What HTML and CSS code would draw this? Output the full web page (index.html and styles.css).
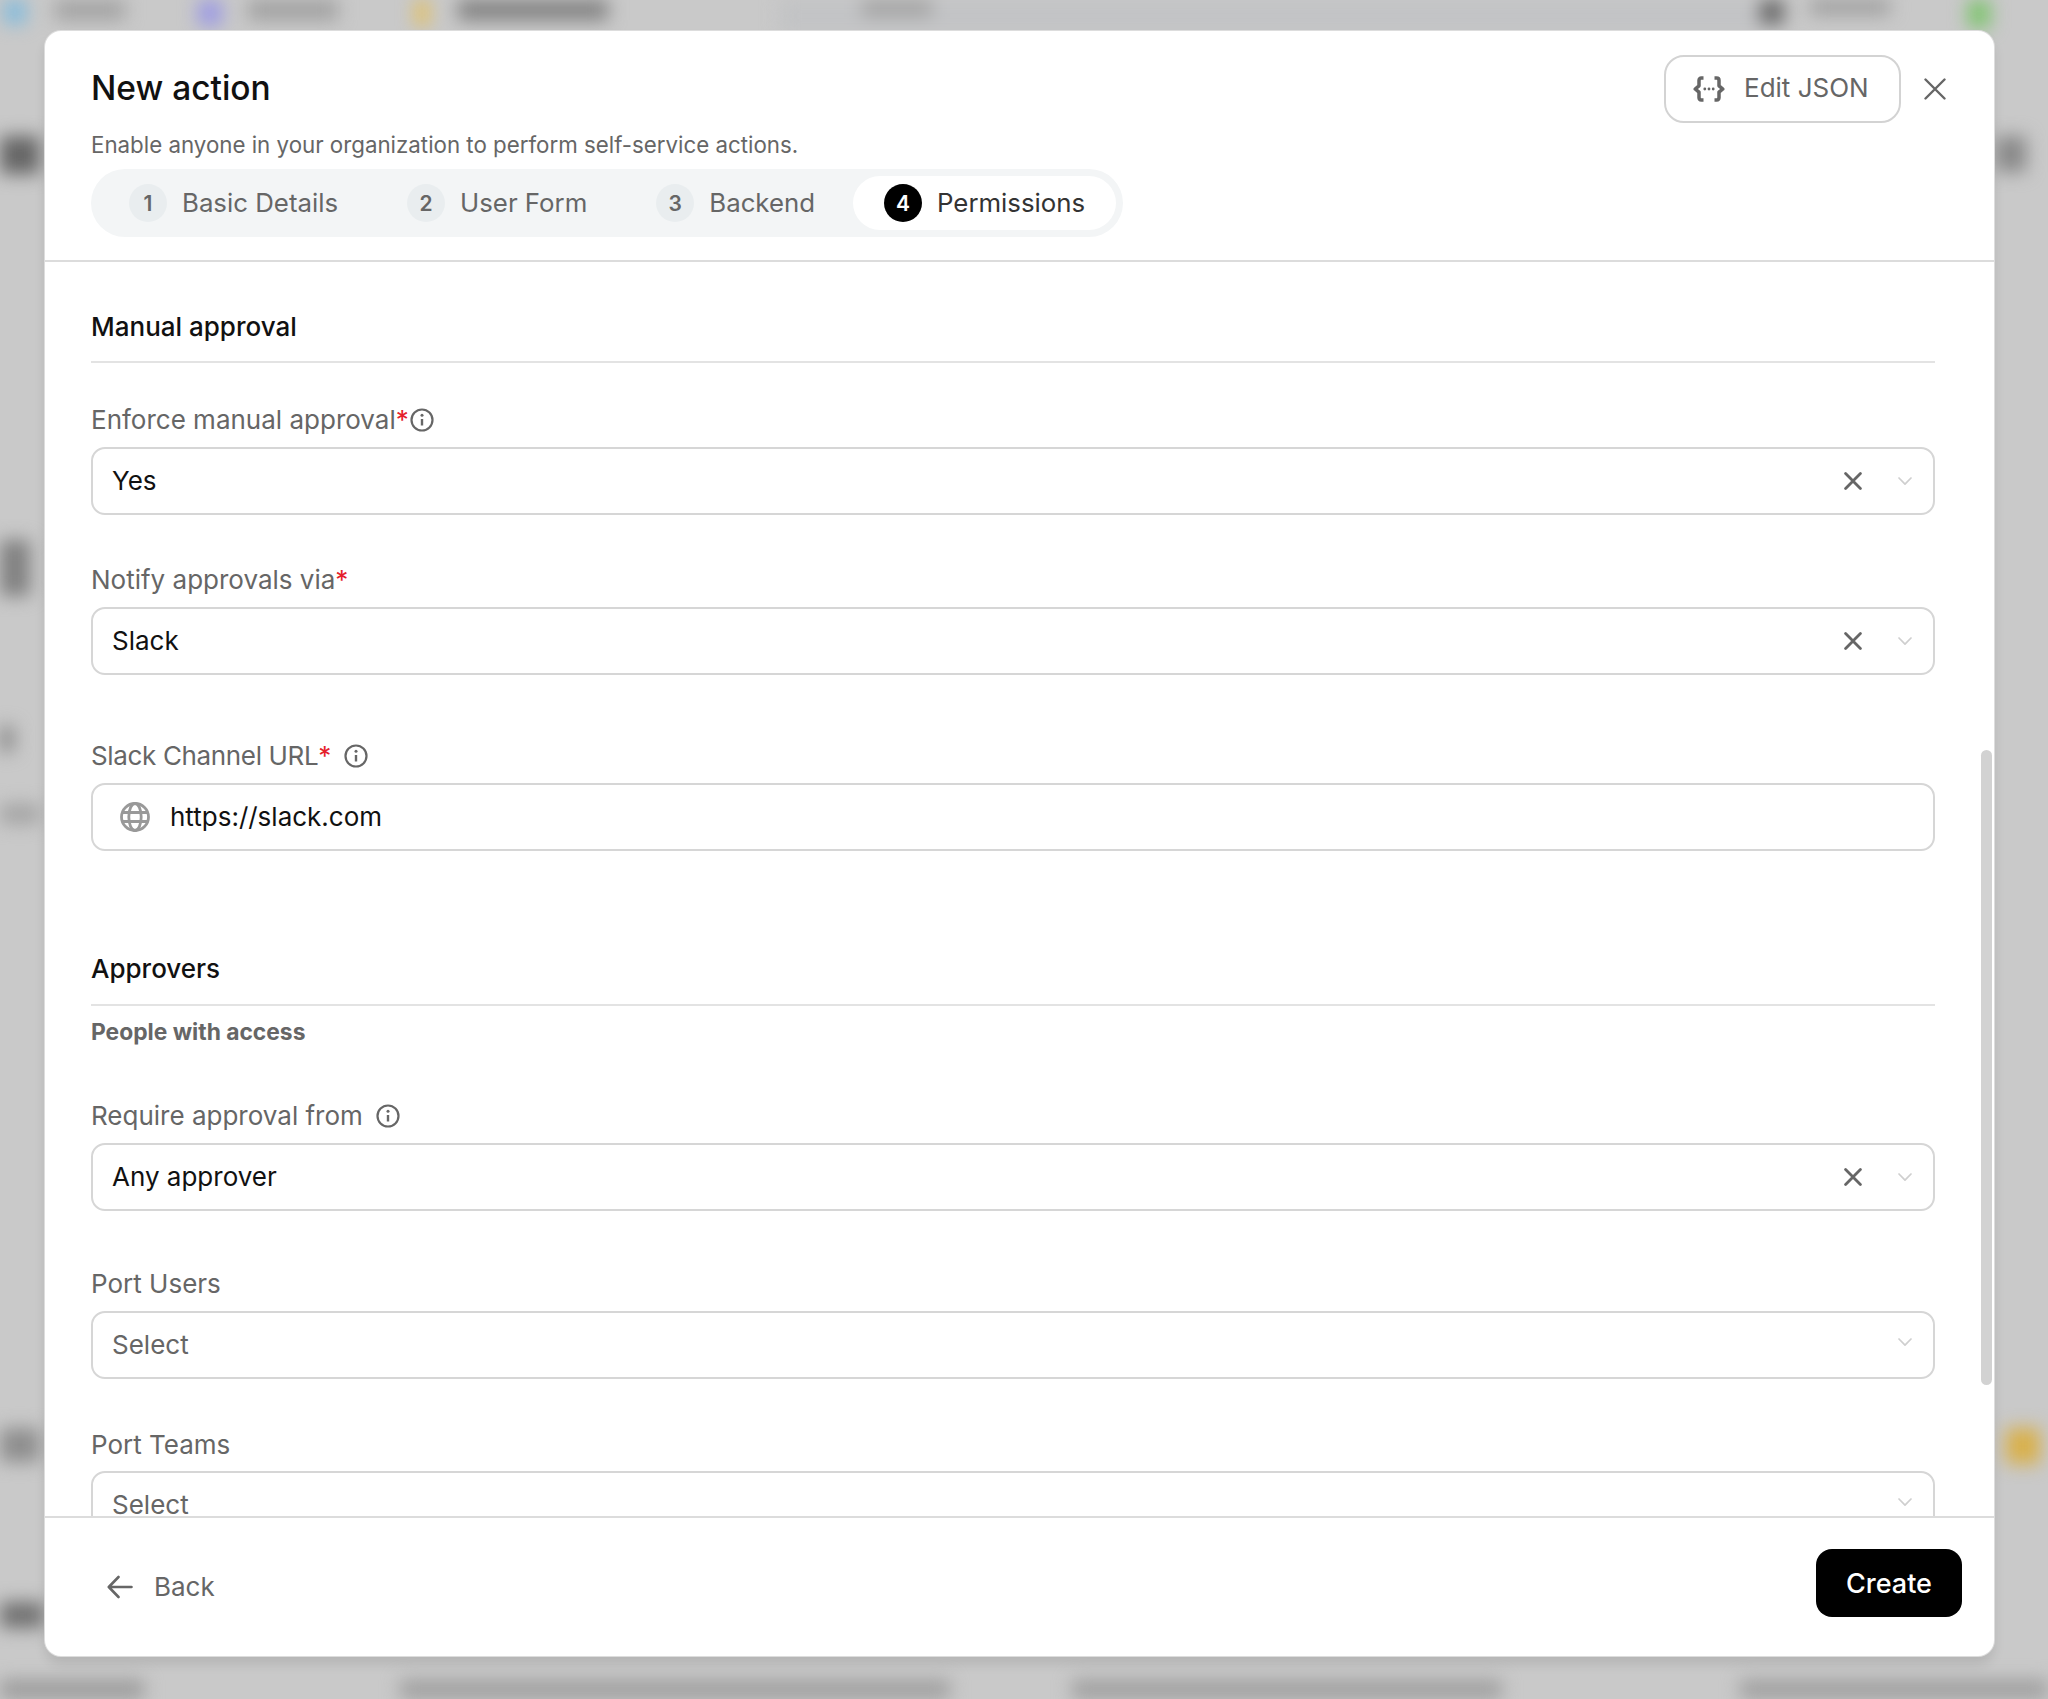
FILE: index.html
```html
<!DOCTYPE html>
<html lang="en">
<head>
<meta charset="utf-8">
<title>New action</title>
<link rel="stylesheet" href="styles.css">
</head>
<body>
<div class="backdrop" aria-hidden="true">
  <i class="blob topbar"></i>
  <i class="blob b1"></i><i class="blob b2"></i><i class="blob b3"></i><i class="blob b4"></i><i class="blob b5"></i><i class="blob b6"></i><i class="blob b7"></i><i class="blob b8"></i><i class="blob b9"></i><i class="blob b10"></i>
  <i class="blob l1"></i><i class="blob l2"></i><i class="blob l3"></i><i class="blob l4"></i><i class="blob l5"></i><i class="blob l6"></i>
  <i class="blob r1"></i><i class="blob r2"></i>
  <i class="blob f1"></i><i class="blob f2"></i><i class="blob f3"></i><i class="blob f4"></i>
</div>

<section class="modal">
  <header class="modal-head">
    <div class="head-row">
      <h1 class="title">New action</h1>
      <div class="head-actions">
        <button class="json-btn">
          <svg class="json-icon" viewBox="0 0 32 26" fill="none" stroke="currentColor" stroke-width="3.500" stroke-linecap="butt" stroke-linejoin="round"><path d="M10.500 2H8.300C6.900 2 6 3 6 4.400V9.800L2.200 13L6 16.200V21.600C6 23 6.900 24 8.300 24H10.500"/><path d="M21.500 2H23.700C25.100 2 26 3 26 4.400V9.800L29.800 13L26 16.200V21.600C26 23 25.100 24 23.700 24H21.500"/><circle cx="11.800" cy="13" r="1.400" fill="currentColor" stroke="none"/><circle cx="16" cy="13" r="1.400" fill="currentColor" stroke="none"/><circle cx="20.200" cy="13" r="1.400" fill="currentColor" stroke="none"/></svg>
          <span class="lifted">Edit JSON</span>
        </button>
        <button class="close-btn" aria-label="Close">
          <svg viewBox="0 0 22 22" fill="none" stroke="currentColor" stroke-width="2.400" stroke-linecap="round"><path d="M1.500 1.500L20.500 20.500M20.500 1.500L1.500 20.500"/></svg>
        </button>
      </div>
    </div>
    <p class="subtitle">Enable anyone in your organization to perform self-service actions.</p>
    <nav class="steps">
      <div class="step"><span class="badge">1</span><span class="lifted">Basic Details</span></div>
      <div class="step"><span class="badge">2</span><span class="lifted">User Form</span></div>
      <div class="step"><span class="badge">3</span><span class="lifted">Backend</span></div>
      <div class="step active"><span class="badge">4</span><span class="lifted">Permissions</span></div>
    </nav>
  </header>

  <div class="modal-body">
    <h2 class="section-title first">Manual approval</h2>

    <div class="field field-first">
      <label class="label">Enforce manual approval<em class="req">*</em><svg class="info tight" viewBox="0 0 24 24" fill="none" stroke="currentColor" stroke-width="2.200"><circle cx="12" cy="12" r="10.500"/><path d="M12 11V17.500" stroke-width="2.400"/><circle cx="12" cy="7.300" r="1.500" fill="currentColor" stroke="none"/></svg></label>
      <div class="control">
        <span class="value">Yes</span>
        <svg class="clear" viewBox="0 0 18 18" fill="none" stroke="currentColor" stroke-width="2.800" stroke-linecap="round"><path d="M1.600 1.600L16.400 16.400M16.400 1.600L1.600 16.400"/></svg>
        <svg class="chev" viewBox="0 0 14 10" fill="none" stroke="currentColor" stroke-width="1.700" stroke-linecap="round" stroke-linejoin="round"><path d="M1 2L7 8.200L13 2"/></svg>
      </div>
    </div>

    <div class="field">
      <label class="label">Notify approvals via<em class="req">*</em></label>
      <div class="control">
        <span class="value">Slack</span>
        <svg class="clear" viewBox="0 0 18 18" fill="none" stroke="currentColor" stroke-width="2.800" stroke-linecap="round"><path d="M1.600 1.600L16.400 16.400M16.400 1.600L1.600 16.400"/></svg>
        <svg class="chev" viewBox="0 0 14 10" fill="none" stroke="currentColor" stroke-width="1.700" stroke-linecap="round" stroke-linejoin="round"><path d="M1 2L7 8.200L13 2"/></svg>
      </div>
    </div>

    <div class="field field-url">
      <label class="label">Slack Channel URL<em class="req">*</em><svg class="info" viewBox="0 0 24 24" fill="none" stroke="currentColor" stroke-width="2.200"><circle cx="12" cy="12" r="10.500"/><path d="M12 11V17.500" stroke-width="2.400"/><circle cx="12" cy="7.300" r="1.500" fill="currentColor" stroke="none"/></svg></label>
      <div class="control">
        <svg class="globe" viewBox="0 0 30 30" fill="none" stroke="currentColor" stroke-width="2.800"><circle cx="15" cy="15" r="13.500"/><ellipse cx="15" cy="15" rx="6.200" ry="13.500"/><path d="M2.800 10.500H27.200M2.800 19.500H27.200"/></svg>
        <span class="value">https://slack.com</span>
      </div>
    </div>

    <h2 class="section-title second">Approvers</h2>
    <p class="note">People with access</p>

    <div class="field field-require">
      <label class="label">Require approval from<svg class="info" viewBox="0 0 24 24" fill="none" stroke="currentColor" stroke-width="2.200"><circle cx="12" cy="12" r="10.500"/><path d="M12 11V17.500" stroke-width="2.400"/><circle cx="12" cy="7.300" r="1.500" fill="currentColor" stroke="none"/></svg></label>
      <div class="control">
        <span class="value">Any approver</span>
        <svg class="clear" viewBox="0 0 18 18" fill="none" stroke="currentColor" stroke-width="2.800" stroke-linecap="round"><path d="M1.600 1.600L16.400 16.400M16.400 1.600L1.600 16.400"/></svg>
        <svg class="chev" viewBox="0 0 14 10" fill="none" stroke="currentColor" stroke-width="1.700" stroke-linecap="round" stroke-linejoin="round"><path d="M1 2L7 8.200L13 2"/></svg>
      </div>
    </div>

    <div class="field field-users">
      <label class="label">Port Users</label>
      <div class="control">
        <span class="value placeholder">Select</span>
        <svg class="chev raised" viewBox="0 0 14 10" fill="none" stroke="currentColor" stroke-width="1.700" stroke-linecap="round" stroke-linejoin="round"><path d="M1 2L7 8.200L13 2"/></svg>
      </div>
    </div>

    <div class="field field-teams">
      <label class="label">Port Teams</label>
      <div class="control">
        <span class="value placeholder">Select</span>
        <svg class="chev raised" viewBox="0 0 14 10" fill="none" stroke="currentColor" stroke-width="1.700" stroke-linecap="round" stroke-linejoin="round"><path d="M1 2L7 8.200L13 2"/></svg>
      </div>
    </div>
    <span class="scrollbar"></span>
  </div>

  <footer class="modal-foot">
    <button class="back-btn">
      <svg viewBox="0 0 26 24" fill="none" stroke="currentColor" stroke-width="2.600" stroke-linecap="round" stroke-linejoin="round"><path d="M24.500 12H2M11.500 2L1.800 12L11.500 22"/></svg>
      <span class="lifted">Back</span>
    </button>
    <button class="create-btn">Create</button>
  </footer>
</section>
</body>
</html>
```

FILE: styles.css
```css
* { box-sizing: border-box; }

html, body {
  margin: 0;
  height: 100%;
}

body {
  position: relative;
  width: 2048px;
  height: 1699px;
  overflow: hidden;
  background: #c9c9c9;
  font-family: "Inter", "Noto Sans", sans-serif;
  color: #666;
}

button {
  font: inherit;
  color: inherit;
  background: none;
  border: 0;
  padding: 0;
}

.lifted { padding-bottom: 2px; }

/* blurred page behind the dialog */
.backdrop {
  position: absolute;
  inset: 0;
  overflow: hidden;
  filter: blur(9px);
}

.blob { position: absolute; display: block; }
.topbar { left: 780px; top: -20px; width: 1000px; height: 52px; background: #c2c3c5; }
.b1 { left: 4px; top: -20px; width: 22px; height: 44px; background: #82bbdc; }
.b2 { left: 55px; top: -16px; width: 70px; height: 36px; background: #a2a2a2; }
.b3 { left: 198px; top: -20px; width: 24px; height: 46px; background: #9c9ae4; }
.b4 { left: 248px; top: -16px; width: 90px; height: 36px; background: #a0a0a0; }
.b5 { left: 416px; top: -20px; width: 12px; height: 46px; background: #e8c050; }
.b6 { left: 458px; top: -16px; width: 150px; height: 36px; background: #808080; }
.b7 { left: 862px; top: -16px; width: 70px; height: 32px; background: #a0a0a0; }
.b8 { left: 1760px; top: -20px; width: 24px; height: 44px; background: #666; }
.b9 { left: 1810px; top: -16px; width: 80px; height: 30px; background: #9a9a9a; }
.b10 { left: 1968px; top: -20px; width: 22px; height: 48px; background: #7cc46c; }
.l1 { left: -6px; top: 136px; width: 46px; height: 38px; background: #666; }
.l2 { left: -6px; top: 540px; width: 36px; height: 56px; background: #808080; }
.l3 { left: -6px; top: 726px; width: 20px; height: 26px; background: #888; }
.l4 { left: -6px; top: 804px; width: 46px; height: 20px; background: #a4a4a4; }
.l5 { left: -6px; top: 1428px; width: 46px; height: 34px; background: #8e8e8e; }
.l6 { left: -6px; top: 1602px; width: 50px; height: 26px; background: #707070; }
.r1 { left: 1996px; top: 136px; width: 30px; height: 36px; background: #888; }
.r2 { left: 2006px; top: 1428px; width: 34px; height: 36px; background: #d9b04a; }
.f1 { left: -6px; top: 1680px; width: 150px; height: 30px; background: #9a9a9a; }
.f2 { left: 400px; top: 1680px; width: 550px; height: 30px; background: #9e9e9e; }
.f3 { left: 1072px; top: 1680px; width: 430px; height: 30px; background: #9e9e9e; }
.f4 { left: 1740px; top: 1680px; width: 320px; height: 30px; background: #9e9e9e; }

/* dialog */
.modal {
  position: absolute;
  left: 45px;
  top: 31px;
  width: 1949px;
  height: 1625px;
  display: flex;
  flex-direction: column;
  background: #fff;
  border-radius: 16px;
  overflow: hidden;
  box-shadow: 0 0 0 1px #ddd, 0 8px 12px rgba(0, 0, 0, .1);
}

.modal-head {
  flex: none;
  height: 231px;
  padding: 24px 48px 0 46px;
  border-bottom: 2px solid #dcdcdc;
}

.head-row {
  display: flex;
  justify-content: space-between;
  align-items: center;
  height: 67px;
}

.title {
  margin: 0 0 2px;
  font-size: 33.5px;
  line-height: 40px;
  font-weight: 500;
  color: #111;
}

.head-actions {
  display: flex;
  align-items: center;
  gap: 23px;
}

.json-btn {
  display: flex;
  align-items: center;
  gap: 19px;
  width: 237px;
  height: 68px;
  padding-left: 27px;
  border: 2px solid #d3d3d3;
  border-radius: 20px;
  font-size: 26px;
  color: #666;
}

.json-icon { width: 32px; height: 26px; }

.close-btn {
  display: block;
  width: 22px;
  height: 22px;
  color: #666;
}

.close-btn svg { display: block; width: 22px; height: 22px; }

.subtitle {
  margin: 8px 0 0;
  font-size: 22.3px;
  line-height: 30px;
  color: #666;
}

.steps {
  display: inline-flex;
  gap: 7px;
  margin-top: 9px;
  padding: 7px;
  height: 68px;
  background: #f3f5f6;
  border-radius: 34px;
}

.step {
  display: flex;
  align-items: center;
  gap: 15px;
  padding: 0 31px;
  border-radius: 28px;
  font-size: 25.8px;
  color: #666;
}

.badge {
  display: flex;
  align-items: center;
  justify-content: center;
  width: 38px;
  height: 38px;
  border-radius: 50%;
  background: #e9edef;
  font-size: 21px;
  font-weight: 600;
}

.step.active {
  background: #fff;
  color: #333;
}

.step.active .badge {
  background: #000;
  color: #fff;
}

/* form */
.modal-body {
  position: relative;
  flex: 1;
  min-height: 0;
  padding: 47px 59px 0 46px;
  overflow: hidden;
}

.section-title {
  margin: 0;
  padding-bottom: 16px;
  border-bottom: 2px solid #e3e3e3;
  font-size: 26px;
  line-height: 36px;
  font-weight: 500;
  color: #111;
}

.section-title.second {
  margin-top: 100px;
  padding-bottom: 17px;
}

.note {
  margin: 11px 0 0;
  font-size: 22.8px;
  line-height: 30px;
  font-weight: 700;
  color: #666;
}

.field { margin-top: 48px; }
.field-first { margin-top: 40px; }
.field-url { margin-top: 64px; }
.field-require { margin-top: 52px; }
.field-users { margin-top: 56px; }
.field-teams { margin-top: 49px; }

.label {
  display: flex;
  align-items: center;
  font-size: 26px;
  line-height: 34px;
  color: #666;
}

.field-url .label { letter-spacing: -.35px; }

.req {
  align-self: flex-start;
  font-style: normal;
  color: #e5202a;
}

.info {
  width: 24px;
  height: 24px;
  margin-left: 13px;
  color: #666;
}

.info.tight { margin-left: 1px; }

.control {
  display: flex;
  align-items: center;
  height: 68px;
  margin-top: 10px;
  padding: 0 21px 0 19px;
  border: 2px solid #d6d6d6;
  border-radius: 14px;
  background: #fff;
}

.field-teams .control { margin-top: 9px; }

.value {
  flex: 1;
  padding-bottom: 2px;
  font-size: 26px;
  color: #111;
}

.placeholder { color: #666; }

.clear {
  width: 18px;
  height: 18px;
  margin-right: 36px;
  color: #666;
}

.chev {
  width: 14px;
  height: 10px;
  color: #cfcfcf;
}

.chev.raised { margin-bottom: 6px; }

.globe {
  width: 30px;
  height: 30px;
  margin: 0 20px 0 8px;
  color: #999;
}

.scrollbar {
  position: absolute;
  right: 2px;
  top: 488px;
  width: 11px;
  height: 635px;
  border-radius: 6px;
  background: #d2d2d2;
}

/* footer */
.modal-foot {
  flex: none;
  height: 140px;
  display: flex;
  align-items: flex-start;
  justify-content: space-between;
  padding: 31px 32px 0 62px;
  border-top: 2px solid #dcdcdc;
}

.back-btn {
  display: flex;
  align-items: center;
  gap: 21px;
  height: 68px;
  margin-top: 4px;
  font-size: 26px;
  color: #666;
}

.back-btn svg { width: 26px; height: 24px; }

.create-btn {
  width: 146px;
  height: 68px;
  border-radius: 16px;
  background: #000;
  color: #fff;
  font-size: 27px;
  font-weight: 500;
}
```
